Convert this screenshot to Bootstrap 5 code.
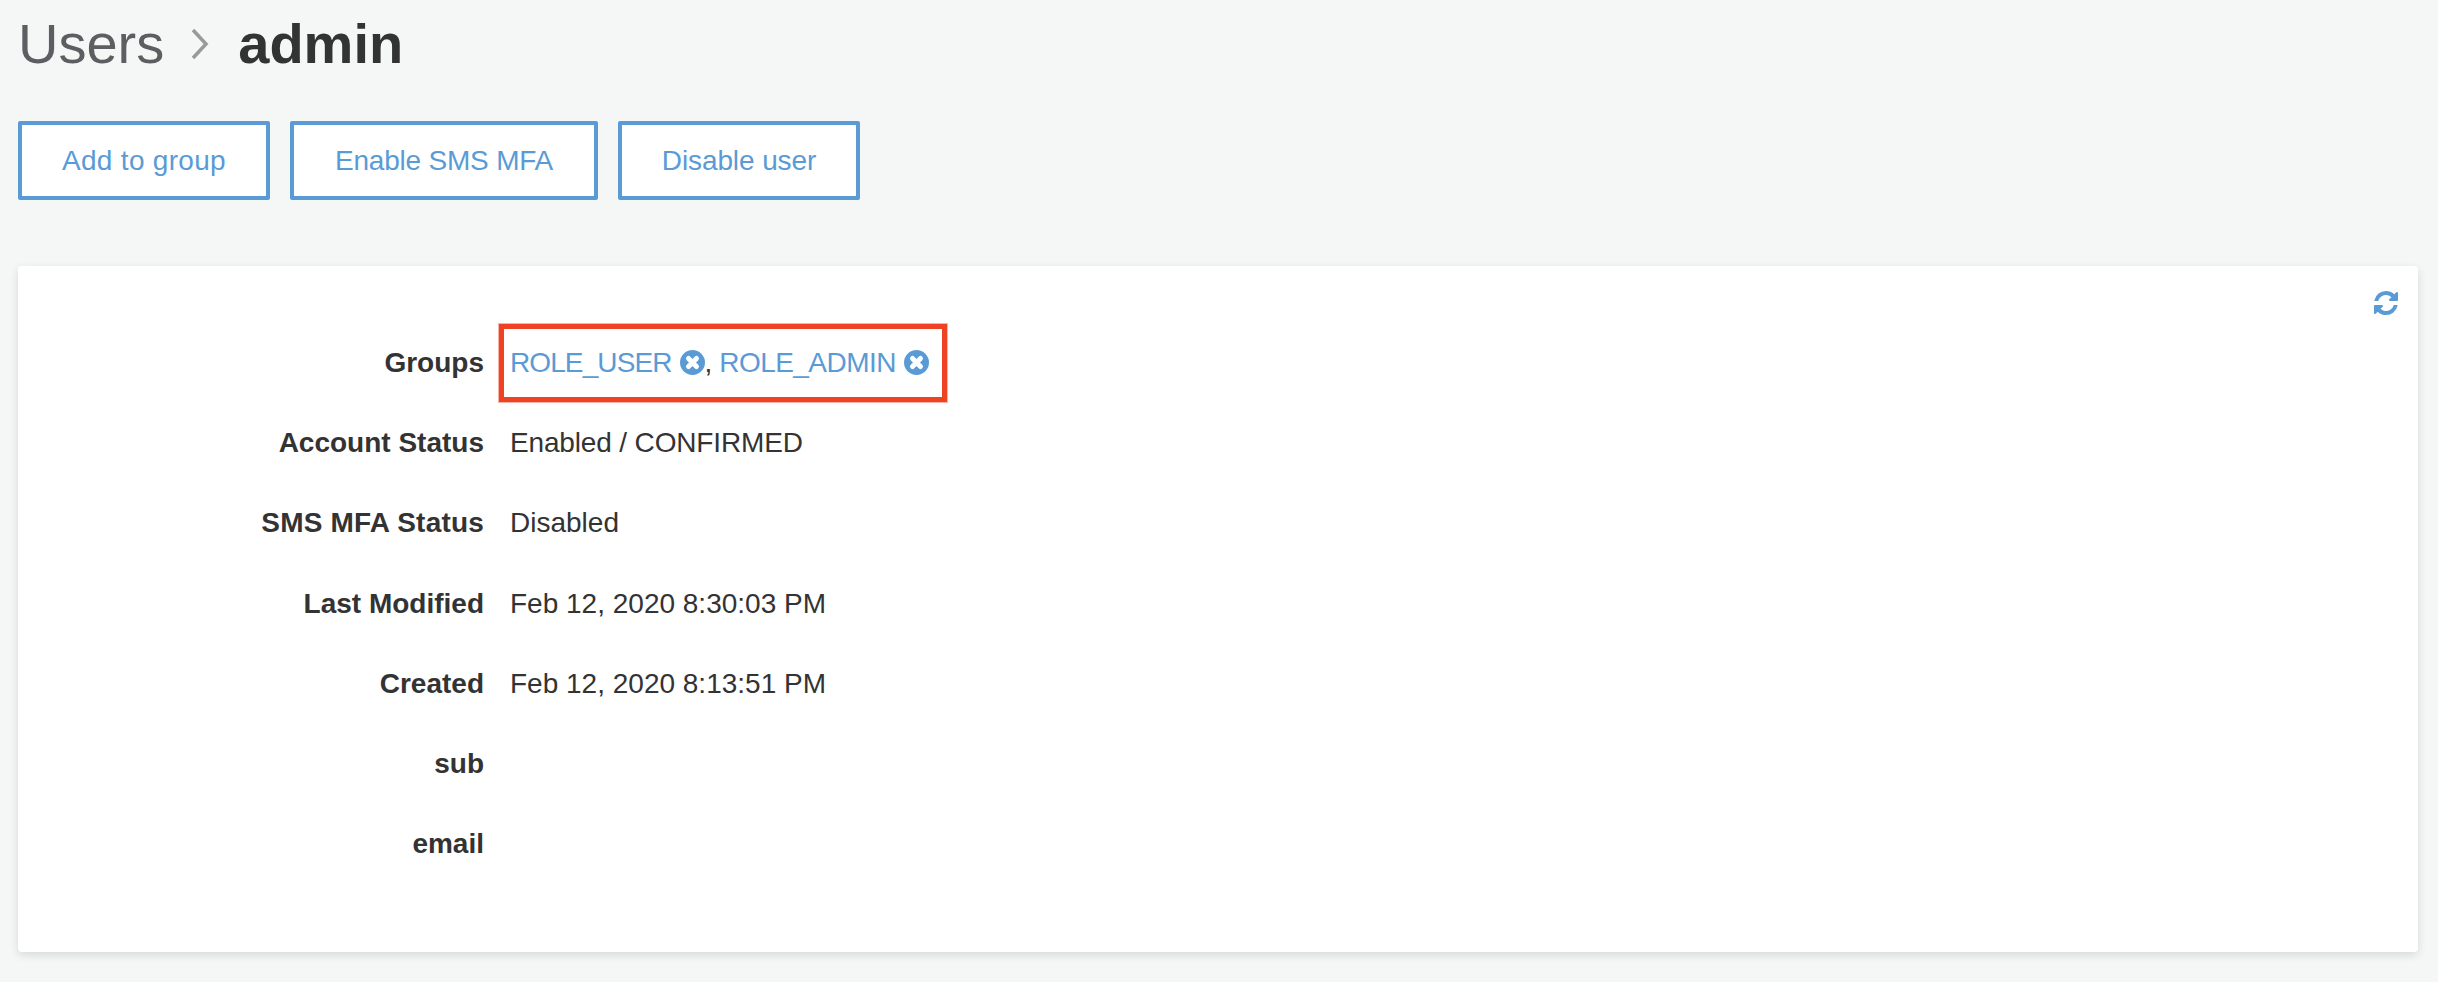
<!DOCTYPE html>
<html lang="en"><head><meta charset="utf-8"><title>Users</title>
<link rel="stylesheet" href="https://cdn.jsdelivr.net/npm/bootstrap@5.3.0/dist/css/bootstrap.min.css">
<style>
html,body{height:100%}
body{background:#f5f7f7;color:#333;font-family:"Liberation Sans",Arial,sans-serif;font-size:28px;overflow:hidden}
.page-wrap{padding:0 20px 0 18px}
.crumb{height:88px;font-size:56px;line-height:88px}
.crumb-parent{color:#5c5f62}
.crumb-sep{margin:0 29px 0 27px;width:18px;height:32px}
.crumb-cur{font-weight:700;color:#333}
.act-row{gap:20px;margin-top:33px}
.act-btn{height:79px;border:4px solid #5a9bd5;border-radius:2px;background:#fff;color:#5a9bd5;font-size:28px;line-height:1;padding:1px 0 0}
.act-btn:hover{background:#fff;color:#5a9bd5;border-color:#5a9bd5}
.act-add{width:252px;letter-spacing:.3px}
.act-sms{width:308px;letter-spacing:-.2px}
.act-dis{width:242px;letter-spacing:-.1px}
.detail-card{margin-top:66px;height:686px;border:0;border-radius:4px;background:#fff;box-shadow:0 3px 10px rgba(0,0,0,.12);padding:57px 0 0}
.refresh{top:23px;right:18px;width:28px;height:28px}
.detail-row{height:80.2px}
.detail-key{width:466px;text-align:right;font-weight:700;flex:none}
.detail-wide{letter-spacing:.2px}
.detail-val{margin-left:26px}
.detail-tight{letter-spacing:-.15px}
.annot{height:78px;margin-left:15px;padding:0 13px 0 6px;border:5px solid #ef4123;box-shadow:0 0 0 1px rgba(239,65,35,.4)}
.grp-link{color:#5a9bd5;text-decoration:none;letter-spacing:-.9px}
.grp-x{width:25px;height:25px;margin-left:8px;vertical-align:-3px}
.grp-next{margin-left:7px;letter-spacing:-.55px}
</style></head>
<body>
<div class="page-wrap">
  <h1 class="crumb d-flex align-items-center m-0 fw-normal">
    <span class="crumb-parent">Users</span>
    <svg class="crumb-sep" viewBox="0 0 18 32" fill="none" stroke="#999" stroke-width="3.5"><path d="M2 2l13 14L2 30"/></svg>
    <span class="crumb-cur">admin</span>
  </h1>
  <div class="d-flex act-row">
    <button type="button" class="btn act-btn act-add">Add to group</button>
    <button type="button" class="btn act-btn act-sms">Enable SMS MFA</button>
    <button type="button" class="btn act-btn act-dis">Disable user</button>
  </div>
  <div class="card detail-card position-relative">
    <svg class="refresh position-absolute" viewBox="0 0 1792 1792" fill="#5a9bd5"><path d="M1639 1056q0 5-1 7-64 268-268 434.5t-478 166.5q-146 0-282.5-55t-243.5-157l-129 129q-19 19-45 19t-45-19-19-45v-448q0-26 19-45t45-19h448q26 0 45 19t19 45-19 45l-137 137q71 66 161 102t187 36q134 0 250-65t186-179q11-17 53-117 8-23 30-23h192q13 0 22.5 9.5t9.5 22.5zm25-800v448q0 26-19 45t-45 19h-448q-26 0-45-19t-19-45 19-45l138-138q-148-137-349-137-134 0-250 65t-186 179q-11 17-53 117-8 23-30 23h-199q-13 0-22.5-9.5t-9.5-22.5v-7q65-268 270-434.5t480-166.5q146 0 284 55.5t245 156.5l130-129q19-19 45-19t45 19 19 45z"/></svg>
    <div class="d-flex align-items-center detail-row">
      <div class="detail-key">Groups</div>
      <div class="annot d-flex align-items-center">
        <span class="text-nowrap"><a class="grp-link" href="#">ROLE_USER<svg class="grp-x" viewBox="0 0 25 25"><circle cx="12.5" cy="12.5" r="12.5" fill="#5a9bd5"/><path d="M8.5 8.5l8 8M16.5 8.5l-8 8" stroke="#fff" stroke-width="5" stroke-linecap="round"/></svg></a>,<a class="grp-link grp-next" href="#">ROLE_ADMIN<svg class="grp-x" viewBox="0 0 25 25"><circle cx="12.5" cy="12.5" r="12.5" fill="#5a9bd5"/><path d="M8.5 8.5l8 8M16.5 8.5l-8 8" stroke="#fff" stroke-width="5" stroke-linecap="round"/></svg></a></span>
      </div>
    </div>
    <div class="d-flex align-items-center detail-row"><div class="detail-key">Account Status</div><div class="detail-val detail-tight">Enabled / CONFIRMED</div></div>
    <div class="d-flex align-items-center detail-row"><div class="detail-key detail-wide">SMS MFA Status</div><div class="detail-val">Disabled</div></div>
    <div class="d-flex align-items-center detail-row"><div class="detail-key">Last Modified</div><div class="detail-val">Feb 12, 2020 8:30:03 PM</div></div>
    <div class="d-flex align-items-center detail-row"><div class="detail-key">Created</div><div class="detail-val">Feb 12, 2020 8:13:51 PM</div></div>
    <div class="d-flex align-items-center detail-row"><div class="detail-key">sub</div><div class="detail-val"></div></div>
    <div class="d-flex align-items-center detail-row"><div class="detail-key">email</div><div class="detail-val"></div></div>
  </div>
</div>
</body></html>
